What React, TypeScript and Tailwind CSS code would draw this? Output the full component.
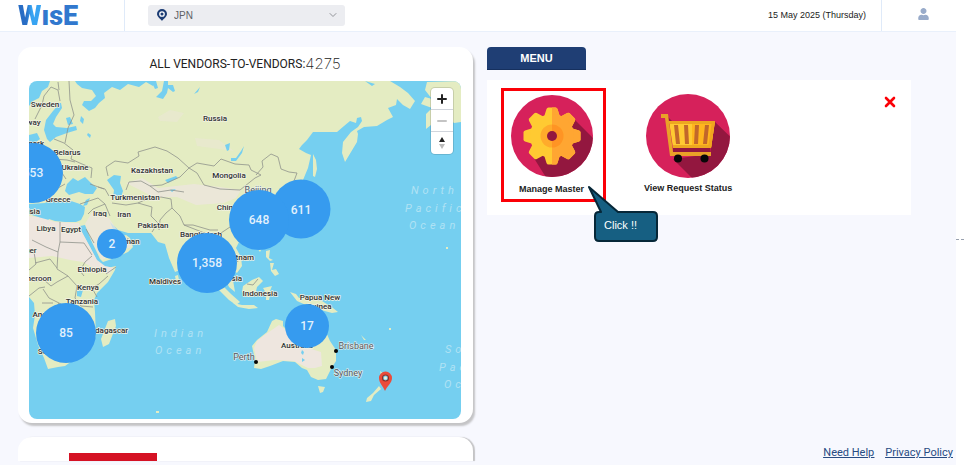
import { ChevronDown } from "lucide-react";
import { FaUser } from "react-icons/fa";

const MAP = { x: 29, y: 81, width: 432, height: 338 };

const clusters = [
  { id: "europe", label: "553", x: 33, y: 173, size: 60 },
  { id: "korea", label: "611", x: 301, y: 209, size: 59 },
  { id: "china", label: "648", x: 259, y: 220, size: 60 },
  { id: "arabia", label: "2", x: 112, y: 244, size: 30 },
  { id: "bangladesh", label: "1,358", x: 207, y: 263, size: 60 },
  { id: "australia", label: "17", x: 307, y: 326, size: 44 },
  { id: "africa", label: "85", x: 66, y: 333, size: 60 },
];

const countries = [
  { name: "Sweden", x: 45, y: 107 },
  { name: "Norway", x: 27, y: 125 },
  { name: "Denmark", x: 28, y: 146 },
  { name: "Belarus", x: 67, y: 155 },
  { name: "Ukraine", x: 75, y: 170 },
  { name: "Russia", x: 215, y: 121 },
  { name: "Kazakhstan", x: 152, y: 173 },
  { name: "Mongolia", x: 229, y: 178 },
  { name: "Turkmenistan", x: 135, y: 200 },
  { name: "Greece", x: 58, y: 202 },
  { name: "Tunisia", x: 27, y: 214 },
  { name: "Iraq", x: 100, y: 216 },
  { name: "Iran", x: 124, y: 217 },
  { name: "China", x: 227, y: 210 },
  { name: "Pakistan", x: 153, y: 228 },
  { name: "Libya", x: 46, y: 231 },
  { name: "Egypt", x: 71, y: 232 },
  { name: "Oman", x: 129, y: 244 },
  { name: "Niger", x: 27, y: 253 },
  { name: "Bangladesh", x: 201, y: 237 },
  { name: "Vietnam", x: 239, y: 260 },
  { name: "Ethiopia", x: 92, y: 272 },
  { name: "Cameroon", x: 33, y: 281 },
  { name: "Maldives", x: 165, y: 284 },
  { name: "Malaysia", x: 226, y: 281 },
  { name: "Kenya", x: 88, y: 290 },
  { name: "Indonesia", x: 260, y: 296 },
  { name: "Tanzania", x: 82, y: 304 },
  { name: "Papua New", x: 320, y: 300 },
  { name: "Guinea", x: 319, y: 309 },
  { name: "Angola", x: 45, y: 317 },
  { name: "Madagascar", x: 106, y: 333 },
  { name: "Australia", x: 297, y: 348 },
  { name: "South Africa", x: 60, y: 354 },
];

const cities = [
  { name: "Beijing", x: 258, y: 193 },
  { name: "Perth", x: 244, y: 360 },
  { name: "Brisbane", x: 356, y: 349 },
  { name: "Sydney", x: 348, y: 376 },
];

const oceans = [
  { name: "North", x: 411, y: 194 },
  { name: "Pacific", x: 405, y: 212 },
  { name: "Ocean", x: 409, y: 229 },
  { name: "Indian", x: 154, y: 337 },
  { name: "Ocean", x: 155, y: 354 },
  { name: "South", x: 445, y: 353 },
  { name: "Pacific", x: 439, y: 371 },
  { name: "Ocean", x: 444, y: 388 },
];

function WorldMap() {
  return (
    <div className="relative overflow-hidden rounded-lg bg-[#75cff0]">
      <svg viewBox="29 81 432 338" className="block h-auto w-full" role="img" aria-label="Vendor map">
        {/* Land */}
        <g fill="#e4ecc2">
          <path d="M50 81L48 87L42 91L39 98L33 101L29 106V204L45 203L52 199L60 202L71 201L80 204L85 207L84 214L81 220L76 222L65 222L55 221L49 219L46 223L38 217L29 214V297L34 303L35 315L33 328L38 345L44 358L48 369L58 367L65 366L72 361L88 352L96 336L95 312L94 300L97 293L108 282L115 270L116 266L103 269L97 261L90 247L81 231L80 226L85 225L91 240L100 259L103 262L115 258L128 252L133 247L130 238L126 235L119 237L113 229L110 222L118 230L128 233L151 233L158 242L165 244L169 258L175 272L180 270L184 255L191 243L202 240L215 247L221 263L224 276L229 287L235 292L233 280L231 269L237 273L242 266L241 257L236 248L239 242L250 247L264 241L276 225L269 214L269 206L277 202L282 213L288 216L286 202L295 191L303 180L308 168L311 155L306 153L299 149L302 145L307 140L313 132H337L344 126L350 121L356 123L357 118L361 117L362 121L358 127L351 132L343 142L342 153L345 162L351 152L357 142L358 134L357 131L364 127L377 126L387 120L393 117L388 108L396 105L397 99L403 105L410 109L415 101L408 93L400 87L390 81H155L153 86L146 82L139 87L128 84L120 90L112 87L104 93L105 98L99 103L95 108L89 111L82 105L84 101L91 101L96 96L92 90L82 88L77 84L75 81Z" />
          <path d="M313 154L316 160L317 169L315 177L313 176L313 165ZM257 248L260 243L262 248L260 252ZM266 251L270 250L269 258L273 260L270 261L266 257ZM270 263L274 263L272 270L276 269L279 274L275 276L271 271Z" />
          <path d="M243 286L252 280L259 277L263 281L257 287L255 296L248 297L242 292ZM215 282L223 286L231 294L240 302L236 305L229 300L219 290ZM233 303L242 305L254 305L258 308L249 309L238 307ZM263 288L272 286L270 291L276 295L270 295L269 300L266 300L266 293ZM290 292L296 294L299 298L305 298L322 301L333 308L338 312L332 313L321 310L308 306L297 301Z" />
          <path d="M272 321L276 319L283 321V326L292 335L300 343L312 348L319 332L326 332L330 341L336 350L336 361L331 369L326 379L318 380L311 377L307 370L302 368L295 362L283 361L270 366L261 369L254 368L255 360L252 346L257 340L267 332Z" />
          <path d="M318 386L325 387L323 392L320 393ZM379 386L381 389L374 395L371 401L366 402L367 398L373 393ZM380 371L384 374L389 378L385 386L382 380ZM108 321L115 319L116 326L109 344L103 347L101 339ZM427 82L461 81V122L454 123L448 117L436 121L426 129V114L432 108L421 104L425 97L432 99L425 90Z" />
          <path d="M175 276L178 275L179 280L176 281ZM446 247H448V249H446ZM389 328H391V330H389ZM361 335L366 340L364 340ZM156 411H159V413H156Z" />
        </g>

        {/* Dry regions */}
        <g fill="#eee6df">
          <path d="M38 217L49 220L55 222L79 223L82 232L97 260L105 266L114 268L109 274L97 270L83 262L70 260L52 256L29 258V216Z" />
          <path d="M92 212L109 218L119 233L130 240L132 247L122 250L102 260L93 244L85 224ZM126 183L142 178L158 188L176 186L194 184L220 187L241 190L236 198L224 203L196 205L177 197L153 197L140 190Z" opacity=".75" />
          <path d="M257 341L266 334L279 325L293 335L308 348L321 352L322 366L315 368L308 368L294 361L275 360L257 362L254 348Z" />
          <path d="M158 117L170 110L184 113L177 122L160 121ZM195 138L219 140L234 151L219 149L197 146Z" opacity=".4" />
        </g>

        {/* Inland water */}
        <g fill="#75cff0">
          <path d="M60 103L53 111L46 120L44 130L47 139L50 142L56 137L67 133L77 130L76 126L67 128L56 127L53 124L56 117L62 108L61 103ZM29 135L37 133L40 139L36 142L29 144Z" />
          <path d="M67 184L73 178L78 181L85 177L91 183L97 188L93 194L85 194L79 192L69 195L65 191ZM107 180L114 175L121 176L120 183L123 191L121 197L113 198L114 190Z" />
          <path d="M151 81L155 89L158 88L156 81ZM164 81L162 91L156 97L163 99L167 93L168 88L173 92L175 91L173 85L168 85L168 81ZM365 81L375 84L372 86Z" />
          <path d="M66 118L70 117L73 124L68 125ZM81 116L84 119L83 124L80 121ZM88 133L91 135L90 138L87 135ZM194 94L200 87L198 92ZM231 158L236 158L241 151L244 146L242 153L236 161L231 161ZM225 145L230 143L229 150L227 151ZM165 180L176 176L178 178L168 183ZM170 190L176 189L172 192ZM77 291L83 290L81 297L77 296ZM83 206L86 200L90 198L87 205Z" />
          <path d="M302 350L304 352L303 355L301 353ZM302 358L305 360L302 362Z" />
        </g>

        {/* Country borders */}
        <g fill="none" stroke="#8f938b" strokeWidth="0.8" strokeLinejoin="round">
          <path d="M35 119L42 105L44 96L51 87L58 90L60 101M58 82L59 90M69 81L70 100L74 115L68 128L65 143M54 139L64 143L73 150L71 159L82 164L92 168L91 178M54 150L53 159L67 160L75 162M33 151L44 154L54 151M45 164L52 171L62 173L66 179M49 188L58 188L65 184" />
          <path d="M108 176L106 167L115 161L128 163L139 156L138 152L155 147L167 151L178 158L189 168L180 177L162 185L150 186L141 181L129 182L126 190M98 187L105 189L109 196M90 184L104 189" />
          <path d="M189 168L197 163L214 166L221 159L235 164L249 165L251 170L261 175L255 178L240 190L220 189L204 185L197 173ZM256 175L263 167L262 161L271 154L278 157L281 169L289 172L297 173L294 181L285 188M150 186L158 192L171 190L184 192" />
          <path d="M80 204L98 198L105 204L93 209L88 214M105 204L110 216M112 203L126 205L138 203L152 207L151 216L158 223L152 232M138 203L147 199L161 197L171 199L172 208L166 213L160 220L159 230M172 208L180 216L184 225L207 234L218 235L230 227M184 225L193 225L210 230L218 230" />
          <path d="M60 222V242L84 243L92 255M60 242L58 252L46 247L32 240M58 252L57 269L68 276L77 286L92 288L99 284L108 276M34 252L36 264L29 270M35 263L50 259L57 268M34 281L44 280L51 286L57 282L68 276M92 256L85 262L80 271L84 276M77 286L75 298L81 306L93 307M29 296L39 288L45 287M43 289L49 298L59 303L69 309L79 306M69 309L71 320M59 303L54 310M42 303L53 303M92 288L97 297M110 252L119 246L126 244L128 238M116 267L106 274M215 239L219 243L216 253L223 258L230 255L235 263M220 240L226 243L232 251L238 262M225 256L228 268M247 284L253 285L258 279M94 243L86 229" />
        </g>

        {/* Labels */}
        <g
          className="font-['Roboto',sans-serif] text-[8px] font-medium"
          fill="#303235"
          stroke="#f3f3e4"
          strokeWidth="1.4"
          strokeLinejoin="round"
          paintOrder="stroke"
          textAnchor="middle"
        >
          {countries.map((c) => (
            <text key={c.name} x={c.x} y={c.y}>{c.name}</text>
          ))}
        </g>
        <g
          className="font-['Roboto',sans-serif] text-[9px]"
          fill="#515761"
          stroke="#e8f1ee"
          strokeWidth="1.2"
          paintOrder="stroke"
          textAnchor="middle"
        >
          {cities.map((c) => (
            <text key={c.name} x={c.x} y={c.y}>{c.name}</text>
          ))}
        </g>
        <g fill="#050505">
          <circle cx="256" cy="362" r="2" />
          <circle cx="336" cy="351" r="2" />
          <circle cx="332" cy="367" r="2" />
        </g>
        <g className="font-['Roboto',sans-serif] text-[11px] italic tracking-[4px]" fill="#b0e2f4">
          {oceans.map((o) => (
            <text key={o.name + o.y} x={o.x} y={o.y}>{o.name}</text>
          ))}
        </g>

        {/* New Zealand pin */}
        <path d="M385 391C383 386 379 383 379 378A6.4 6.4 0 0 1 392 378C392 383 387 386 385 391Z" fill="#ea4b3b" />
        <circle cx="385.500" cy="378" r="3" fill="#75cff0" stroke="#8c3027" strokeWidth="1.2" />
        <circle cx="385.500" cy="378" r="1.500" fill="#f1f2dc" />
      </svg>

      {clusters.map((c) => (
        <button
          key={c.id}
          className="absolute flex -translate-x-1/2 -translate-y-1/2 items-center justify-center rounded-full bg-[#369bef] font-['Roboto',sans-serif] text-xs font-medium text-[#e3f1fc]"
          style={{
            left: `${((c.x - MAP.x) / MAP.width) * 100}%`,
            top: `${((c.y - MAP.y) / MAP.height) * 100}%`,
            width: c.size,
            height: c.size,
          }}
        >
          {c.label}
        </button>
      ))}

      {/* Zoom controls */}
      <div className="absolute top-[7px] right-2 flex w-[22px] flex-col divide-y divide-gray-300 rounded bg-white shadow-[0_0_0_1px_#00000020]">
        <button aria-label="Zoom in" className="flex h-[22px] items-center justify-center">
          <svg viewBox="0 0 10 10" className="size-2.5" stroke="#222" strokeWidth="2" strokeLinecap="round">
            <path d="M5 1V9M1 5H9" />
          </svg>
        </button>
        <button aria-label="Zoom out" className="flex h-[22px] items-center justify-center">
          <svg viewBox="0 0 10 10" className="size-2.5" stroke="#c4c4c4" strokeWidth="2" strokeLinecap="round">
            <path d="M1 5H9" />
          </svg>
        </button>
        <button aria-label="Reset bearing" className="flex h-[22px] items-center justify-center">
          <svg viewBox="0 0 8 14" className="h-3.5 w-2">
            <path d="M4 1L7 6H1Z" fill="#222" />
            <path d="M4 13L7 8H1Z" fill="#bbb" />
          </svg>
        </button>
      </div>
    </div>
  );
}

const TOOTH = "M33 22L35.500 14Q36 12.500 37.500 12.500H44.500Q46 12.500 46.500 14L49 22Z";

function GearIcon() {
  return (
    <svg viewBox="0 0 82 82" className="size-[82px]" aria-hidden="true">
      <defs>
        <clipPath id="gear-disc">
          <circle cx="41" cy="41" r="41" />
        </clipPath>
        <clipPath id="gear-half">
          <path d="M41 0H82V82H41Z" />
        </clipPath>
      </defs>
      <circle cx="41" cy="41" r="41" fill="#d6215b" />
      <path d="M61 22L100 61V100H46L21 60L41 41Z" fill="#93173f" clipPath="url(#gear-disc)" />
      <g fill="#ffca32">
        {[0, 45, 90, 135, 180, 225, 270, 315].map((a) => (
          <path key={a} d={TOOTH} transform={`rotate(${a} 41 41)`} />
        ))}
        <circle cx="41" cy="41" r="22" />
      </g>
      <g fill="#ffa632" clipPath="url(#gear-half)">
        {[0, 45, 90, 135, 180].map((a) => (
          <path key={a} d={TOOTH} transform={`rotate(${a} 41 41)`} />
        ))}
        <circle cx="41" cy="41" r="22" />
      </g>
      <circle cx="41" cy="41" r="11.500" fill="#ffab2b" />
      <path d="M41 29.500A11.500 11.500 0 0 1 41 52.500Z" fill="#ff9424" />
      <circle cx="41" cy="41" r="5" fill="#93173f" />
    </svg>
  );
}

function CartIcon() {
  return (
    <svg viewBox="0 0 84 84" className="size-[84px]" aria-hidden="true">
      <defs>
        <clipPath id="cart-disc">
          <circle cx="42" cy="42" r="42" />
        </clipPath>
      </defs>
      <circle cx="42" cy="42" r="42" fill="#d6215b" />
      <path d="M68 27L100 58V100H62L27 65L64 60ZM20 21L29 30L24 32Z" fill="#93173f" clipPath="url(#cart-disc)" />
      <path d="M23 27H69L65 54H27Z" fill="#ffca32" />
      <path d="M46 27H69L65 54H46Z" fill="#ffb61e" />
      <path d="M23 27H69L68.500 30H23.500ZM27 51H65.500L65 54H27Z" fill="#eda721" />
      <path d="M66 27H69L65 54H62Z" fill="#f0a51f" />
      <path d="M28 31H32L34 50H30ZM38 31H42L43 50H39ZM49 31H53L52 50H48ZM59 31H63L61 50H57Z" fill="#c2672a" />
      <path d="M27 54H64V58H27Z" fill="#93173f" />
      <path d="M15 20H22L27 58H65V62H24L19 24H15Z" fill="#e9a128" />
      <circle cx="32" cy="64.500" r="4" fill="#080808" />
      <circle cx="58.500" cy="64.500" r="4" fill="#080808" />
    </svg>
  );
}

function Header() {
  return (
    <header className="flex h-8 items-stretch border-b border-[#e9f0fb] bg-white">
      <a
        href="#"
        className="flex w-[125px] shrink-0 items-center border-r border-[#dfeaf9] pl-[18px] font-['Roboto',sans-serif] text-[27px] leading-6 font-black text-[#3178ce]"
      >
        <span className="bg-linear-to-r from-[#286cc4] from-35% to-[#38a4f2] to-60% bg-clip-text text-transparent">W</span>ısE
      </a>
      <div className="relative mt-[5px] ml-[23px] flex h-[21px] w-[197px]">
        <label htmlFor="country" className="sr-only">Country</label>
        <select
          id="country"
          className="w-full appearance-none rounded-[3px] bg-[#ecedf1] pl-[26px] text-[10px] leading-4 text-[#606165]"
        >
          <option>JPN</option>
        </select>
        <svg viewBox="0 0 10 12" className="pointer-events-none absolute top-1 left-[9px] h-3 w-2.5">
          <path d="M5 12C4 10 0 8 0 5A5 5 0 0 1 10 5C10 8 6 10 5 12Z" fill="#1d3d74" />
          <circle cx="5" cy="5" r="2.200" fill="#1d3d74" stroke="#fff" strokeWidth="1.300" />
        </svg>
        <ChevronDown className="pointer-events-none absolute top-1 right-1.5 size-3 text-[#929499]" strokeWidth={2} />
      </div>
      <time dateTime="2025-05-15" className="ml-auto flex items-center pr-[15px] text-[9px] text-[#222]">
        15 May 2025 (Thursday)
      </time>
      <button aria-label="Account" className="flex w-[75px] items-center justify-center border-l border-[#dfeaf9] pb-1 pl-2">
        <FaUser className="h-3 w-[11px] text-[#98abca]" />
      </button>
    </header>
  );
}

function Menu() {
  return (
    <section className="mr-[42px]">
      <button className="block h-[23px] w-[99px] rounded-t border-b border-[#16305e] bg-[#1f3e74] text-[11px] font-bold text-white">
        MENU
      </button>
      <div className="mt-2.5 flex min-h-[135px] items-start bg-white pt-2 pr-[15px] pl-[14px]">
        <div className="relative">
          <button className="flex h-[114px] w-[105px] flex-col items-center border-3 border-[#fb0007] pt-1 pr-1 text-[9px] font-bold text-[#222]">
            <GearIcon />
            <span className="mt-1.5 leading-3">Manage Master</span>
          </button>
          <div className="absolute top-[97px] left-[87px] h-[58px] w-[72px]">
            <svg viewBox="0 0 72 58" className="absolute inset-0 size-full" aria-hidden="true">
              <path
                d="M1 2L13 27H11Q7 27 7 31V52Q7 56 11 56H65Q69 56 69 52V31Q69 27 65 27H30Z"
                fill="#165f82"
                stroke="#062738"
                strokeWidth="2"
                strokeLinejoin="round"
              />
            </svg>
            <span className="relative block pt-8 pl-4 text-[11px] leading-4 text-white">Click !!</span>
          </div>
        </div>
        <button className="ml-[38px] flex flex-col items-center pt-[6px] text-[9px] font-bold text-[#222]">
          <CartIcon />
          <span className="mt-1 leading-3">View Request Status</span>
        </button>
        <button aria-label="Close menu" className="mt-2 ml-auto">
          <svg viewBox="0 0 12 12" className="size-3" stroke="#fb0007" strokeWidth="2.600" strokeLinecap="round">
            <path d="M2 2L10 10M10 2L2 10" />
          </svg>
        </button>
      </div>
    </section>
  );
}

export default function App() {
  return (
    <div className="relative min-h-screen bg-white pr-2 font-['Liberation_Sans',Arial,sans-serif]">
      <div className="flex min-h-screen flex-col bg-[#f7f8fe]">
        <Header />
        <main className="grid flex-1 grid-cols-[455fr_466fr] gap-[14px] pt-[15px] pr-[3px] pb-1 pl-[18px]">
          <div className="flex flex-col gap-[14px]">
            <section className="rounded-[14px] bg-white pr-3 pb-1 pl-[11px] shadow-[2px_3px_2px_#c4c4c6]">
              <h2 className="flex h-[34px] items-center justify-center font-['Roboto',sans-serif] text-xs text-[#222]">
                ALL VENDORS-TO-VENDORS:
                <span className="font-['Inter',sans-serif] text-[15px] font-extralight">4275</span>
              </h2>
              <WorldMap />
            </section>
            {/* Next card, cut at the bottom of the view */}
            <section className="flex min-h-6 flex-1 items-end rounded-t-[14px] bg-white pl-[51px] shadow-[2px_0_1px_#c4c4c6]">
              <div className="h-2 w-[88px] bg-[#d51224]"></div>
            </section>
          </div>
          <div className="flex flex-col">
            <Menu />
            <footer className="mt-auto flex justify-end gap-[11px] font-['Roboto',sans-serif] text-[11px] leading-4 text-[#284b82] underline">
              <a href="#">Need Help</a>
              <a href="#">Privacy Policy</a>
            </footer>
          </div>
        </main>
      </div>
      <div className="absolute top-[239px] right-0 w-2 border-t border-dashed border-gray-400"></div>
    </div>
  );
}
